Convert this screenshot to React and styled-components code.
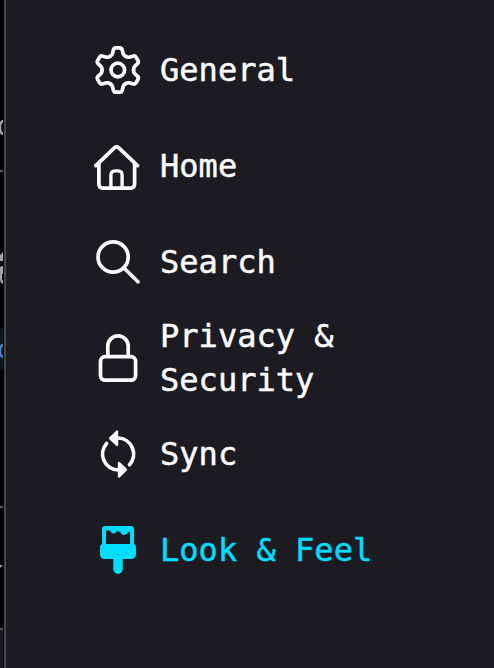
import React from "react";
import styled, { createGlobalStyle } from "styled-components";

const GlobalStyle = createGlobalStyle`
  html, body { margin: 0; background: #1c1b22; }
  * { box-sizing: border-box; }
`;

const Window = styled.div`
  display: flex;
  width: 494px;
  height: 668px;
  overflow: hidden;
  background: #1c1b22;
`;

const PageEdge = styled.aside`
  position: relative;
  flex: 0 0 6px;
  display: flex;
  flex-direction: column;
  overflow: hidden;
  background: #020204;
  border-right: 2px solid #48484b;
`;

const EdgeSection = styled.div`
  flex: 0 0 ${(p) => p.$height}px;
  width: 3px;
  background: ${(p) => p.$color || "transparent"};
`;

const EdgeMarks = styled.svg`
  position: absolute;
  inset: 0 auto auto 0;
`;

const Nav = styled.nav`
  display: flex;
  flex-direction: column;
  width: 320px;
  margin: 22px 0 0 88px;
`;

const Category = styled.a`
  display: flex;
  align-items: center;
  gap: 18px;
  height: 96px;
  color: ${(p) => (p.$selected ? "#00ddff" : "#fbfbfe")};
  font: 32px/44px "DejaVu Sans Mono", monospace;
  letter-spacing: 0.03px;
  -webkit-text-stroke: 0.5px currentColor;
`;

const Icon = styled.svg`
  flex: 0 0 48px;
  width: 48px;
  height: 48px;
  fill: none;
  stroke: currentColor;
  stroke-width: 3.7;
  stroke-linecap: round;
  stroke-linejoin: round;
`;

const Label = styled.span`
  width: 240px;
`;

const tooth =
  "M-7.85-13.6C-6.2-14.5-5.6-15.3-5.2-16.8L-4.5-19.8Q-4-22.2-1.8-22.2H1.8Q4-22.2 4.5-19.8L5.2-16.8C5.6-15.3 6.2-14.5 7.85-13.6";

const General = () => (
  <g transform="translate(23.8 24)">
    <circle r="6.8" />
    {[0, 60, 120, 180, 240, 300].map((a) => (
      <path key={a} d={tooth} transform={`rotate(${a})`} />
    ))}
  </g>
);

const Home = () => (
  <>
    <path d="M1.8 23.6 20.6 5.6Q22.6 4 24.6 5.6L43.5 23.6" />
    <path d="M4.9 21.5V41.8Q4.9 46.2 9.3 46.2H36.2Q40.6 46.2 40.6 41.8V21.5" />
    <path d="M16.9 46V33.2Q16.9 28.9 21.2 28.9H23.8Q28.1 28.9 28.1 33.2V46" strokeWidth="3.4" />
  </>
);

const Search = () => (
  <>
    <circle cx="19.1" cy="19" r="15.1" />
    <path d="M30.2 30.2 44 43.8" />
  </>
);

const Lock = () => (
  <>
    <rect x="6.5" y="22.7" width="35.1" height="23.5" rx="4.6" />
    <path d="M13.8 22V12.1a10.2 10.2 0 0 1 20.4 0V22" />
  </>
);

const Sync = () => (
  <>
    <path d="M12.6 13.4A16 16 0 0 0 24 40M35.5 34.7A16 16 0 0 0 24 8" />
    <path
      d="M15.7 7.3 22.4.8Q24 0 24 1.8V14.8Q24 16.8 22.4 15.7L15.7 9.4Q14.6 8.3 15.7 7.3ZM32.4 40.7 25.7 47.2Q24 48 24 46.2V33.2Q24 31.2 25.7 32.3L32.4 38.6Q33.5 39.7 32.4 40.7Z"
      fill="currentColor"
      strokeWidth="0.4"
    />
  </>
);

const Brush = () => (
  <path
    fill="currentColor"
    fillRule="evenodd"
    stroke="none"
    d="M11 0H37Q40 0 40 3V18Q42 19 42 21V28Q42 33 37 33H28.7V43.3A4.7 4.7 0 0 1 19.3 43.3V33H11Q6 33 6 28V21Q6 19 8 18V3Q8 0 11 0ZM12 5V18H36V5.5C33.5 6 33 9 30 9C27 9 26.8 5.2 24 5.2C21.5 5.2 22 7.6 19.8 7.6C17 7.6 17 4.5 14.6 4.2Q13 4 12 5Z"
  />
);

const categories = [
  { label: "General", Glyph: General },
  { label: "Home", Glyph: Home },
  { label: "Search", Glyph: Search },
  { label: "Privacy & Security", Glyph: Lock },
  { label: "Sync", Glyph: Sync },
  { label: "Look & Feel", Glyph: Brush, selected: true },
];

const edgeSections = [
  [170],
  [2, "#54575b"],
  [156],
  [42, "#0a1826"],
  [136],
  [2, "#54575b"],
  [120],
  [2, "#54575b"],
  [38, "#1c1b22"],
];

export default function App() {
  return (
    <>
      <GlobalStyle />
      <Window>
        <PageEdge>
          {edgeSections.map(([height, color], i) => (
            <EdgeSection key={i} $height={height} $color={color} />
          ))}
          <EdgeMarks width="3" height="668" fill="none">
            <path
              d="M4 121Q0 121 0 127.5T4 134"
              stroke="#a5a5a7"
              strokeWidth="2.5"
            />
            <path
              d="M0 255 3 252V261H0ZM0 267Q1 266 3 266V273L2 275V279L3 281V284Q0 283 0 279Z"
              fill="#a5a5a7"
            />
            <path
              d="M4 345Q0 345 0 351T4 357"
              stroke="#4c82c4"
              strokeWidth="2.5"
            />
            <path d="M0 565H3L0 568Z" fill="#a5a5a7" />
          </EdgeMarks>
        </PageEdge>
        <Nav>
          {categories.map(({ label, Glyph, selected }) => (
            <Category key={label} $selected={selected}>
              <Icon viewBox="0 0 48 48" aria-hidden="true">
                <Glyph />
              </Icon>
              <Label>{label}</Label>
            </Category>
          ))}
        </Nav>
      </Window>
    </>
  );
}
